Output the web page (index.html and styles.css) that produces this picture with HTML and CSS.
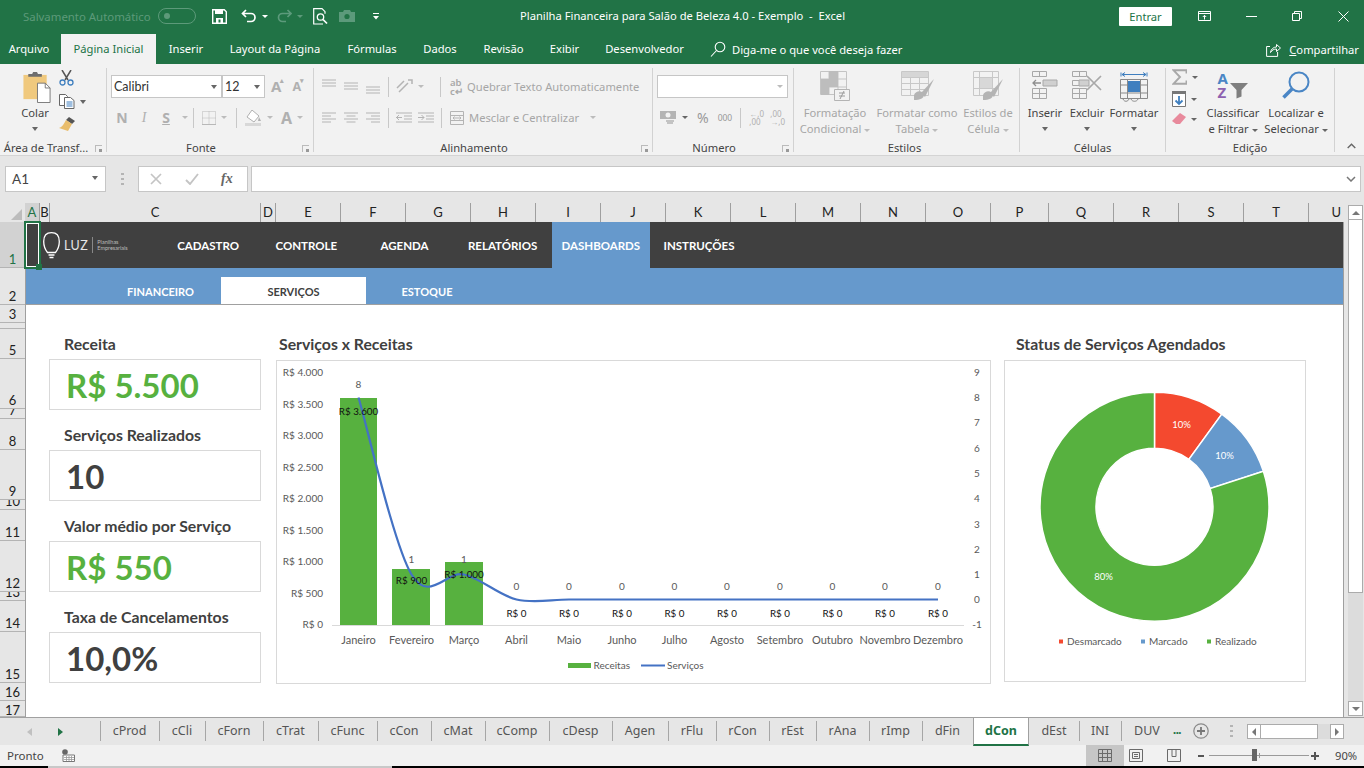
FILE: index.html
```html
<!DOCTYPE html>
<html lang="pt-BR">
<head>
<meta charset="utf-8">
<title>Planilha Financeira para Salão de Beleza 4.0 - Exemplo - Excel</title>
<link rel="stylesheet" href="styles.css">
</head>
<body>
<div class="app">

  <header class="titlebar">
    <div class="qat">
      <span class="autosave">Salvamento Automático</span>
      <span class="toggle"><i></i></span>
      <svg class="qi save" width="15" height="15" viewBox="0 0 15 15"><path d="M.7.7h11.6l2 2v11.6H.7z" fill="none" stroke="#fff" stroke-width="1.4"/><path d="M3 1h8v4H3zM4 9h7v5H4z" fill="#fff"/><path d="M6.500 10.500h2v3h-2z" fill="#217346"/></svg>
      <svg class="qi undo" width="16" height="14" viewBox="0 0 16 14"><path d="M5 1 1.500 4.500 5 8M2 4.500h8a4 4 0 0 1 0 8H6" fill="none" stroke="#fff" stroke-width="1.700"/></svg>
      <span class="qcaret"></span>
      <svg class="qi redo" width="15" height="14" viewBox="0 0 15 14"><path d="M10.500 1 14 4.500 10.500 8M13.500 4.500h-8a4 4 0 0 0 0 8H9" fill="none" stroke="#5c9a7b" stroke-width="1.700"/></svg>
      <span class="qcaret dim"></span>
      <svg class="qi preview" width="15" height="17" viewBox="0 0 15 17"><path d="M10 16H.7V.7H9l3 3v2" fill="none" stroke="#fff" stroke-width="1.200"/><circle cx="7.500" cy="9" r="3.200" fill="none" stroke="#fff" stroke-width="1.300"/><path d="m10 11.500 4 4" stroke="#fff" stroke-width="1.700"/></svg>
      <svg class="qi camera" width="16" height="12" viewBox="0 0 16 12"><path d="M0 2h4l1-2h6l1 2h4v10H0z" fill="#5c9a7b"/><circle cx="8" cy="6.500" r="2.600" fill="#217346"/></svg>
      <svg class="qi custom" width="6" height="7" viewBox="0 0 6 7"><path d="M0 .5h6" stroke="#fff"/><path d="M0 3h6L3 6.500z" fill="#fff"/></svg>
    </div>
    <div class="doc-title">Planilha Financeira para Salão de Beleza 4.0 - Exemplo&nbsp; -&nbsp; Excel</div>
    <div class="winctl">
      <span class="entrar">Entrar</span>
      <svg class="wi w-disp" width="13" height="10" viewBox="0 0 13 10"><path d="M.5.500h12v9H.5zM.5 2.500h12M6.500 8.500v-4M4.800 6 6.500 4.300 8.200 6" fill="none" stroke="#fff"/></svg>
      <svg class="wi w-min" width="11" height="1" viewBox="0 0 11 1"><path d="M0 .5h11" stroke="#fff"/></svg>
      <svg class="wi w-rest" width="10" height="10" viewBox="0 0 10 10"><path d="M.5 2.500h7v7h-7zM2.500 2.500v-2h7v7h-2" fill="none" stroke="#fff"/></svg>
      <svg class="wi w-close" width="11" height="11" viewBox="0 0 11 11"><path d="m.5.500 10 10M10.500.500l-10 10" stroke="#fff"/></svg>
    </div>
  </header>

  <nav class="menubar">
    <div class="mtabs">
      <span class="mtab first">Arquivo</span>
      <span class="mtab active">Página Inicial</span>
      <span class="mtab">Inserir</span>
      <span class="mtab">Layout da Página</span>
      <span class="mtab">Fórmulas</span>
      <span class="mtab">Dados</span>
      <span class="mtab">Revisão</span>
      <span class="mtab">Exibir</span>
      <span class="mtab">Desenvolvedor</span>
    </div>
    <span class="tellme">
      <svg width="16" height="16" viewBox="0 0 16 16"><circle cx="10" cy="6" r="4.800" fill="none" stroke="#fff" stroke-width="1.100"/><path d="m6.500 9.500-5.500 6" stroke="#fff" stroke-width="1.100"/></svg>
      Diga-me o que você deseja fazer
    </span>
    <span class="share">
      <svg width="15" height="15" viewBox="0 0 15 15"><path d="M4 4.500H.6v9.900h11V10" fill="none" stroke="#fff"/><path d="M4.500 10.500c.5-3.500 3-5.500 6-5.500V2.500l4 3.500-4 3.500V7c-2.500 0-4.500 1-6 3.500z" fill="none" stroke="#fff"/></svg>
      <span><u>C</u>ompartilhar</span>
    </span>
  </nav>

  <section class="ribbon">
    <div class="rgroup g-clip">
      <div class="rbody row">
        <div class="big w-colar">
          <svg class="bigicon colar-i" width="28" height="31" viewBox="0 0 28 32"><path d="M0 3h24v25H0z" fill="#f0c97e"/><path d="M5 5V2h4l1-2h4l1 2h4v3z" fill="#6e6e6e"/><path d="M14.500 11.500h8l5 5v15h-13z" fill="#fff" stroke="#7a7a7a"/><path d="M22.500 11.500v5h5" fill="none" stroke="#7a7a7a"/></svg>
          <span class="blabel dark">Colar</span>
          <span class="caret c-line"></span>
        </div>
        <div class="smallcol clipcol">
          <svg width="15" height="16" viewBox="0 0 15 16"><path d="M3 0l6 10M12 0 6 10" stroke="#555" stroke-width="1.500"/><circle cx="3.500" cy="12.500" r="2.500" fill="none" stroke="#3f7fbf" stroke-width="1.300"/><circle cx="11.500" cy="12.500" r="2.500" fill="none" stroke="#3f7fbf" stroke-width="1.300"/></svg>
          <span class="iconrow"><svg width="16" height="15" viewBox="0 0 16 15"><path d="M.5.500h6l2 2v9h-8z" fill="#fff" stroke="#666"/><path d="M5.500 3.500h6l3.500 3v8h-9.500z" fill="#fff" stroke="#666"/><path d="M7.500 8h6M7.500 10h6M7.500 12h6" stroke="#3f7fbf"/></svg><span class="caret"></span></span>
          <svg width="16" height="14" viewBox="0 0 16 14"><path d="M10 0l6 4-3 3-6-4z" fill="#555"/><path d="M7 3l6 4-4 7-9-3c3-1 5-4 7-8z" fill="#e9bd6b"/></svg>
        </div>
      </div>
      <div class="rlabel lw lclip">Área de Transf...<i class="launch"></i></div>
    </div>

    <div class="rgroup g-font">
      <div class="rbody col">
        <div class="rrow r1">
          <span class="combo font">Calibri<i class="caret"></i></span>
          <span class="combo size">12<i class="caret"></i></span>
          <span class="glyph-a big-a">A<sup>▴</sup></span>
          <span class="glyph-a small-a">A<sup>▾</sup></span>
        </div>
        <div class="rrow r2 fontfmt">
          <b class="fmt f-n">N</b><i class="fmt f-i">I</i><u class="fmt f-s">S</u><span class="caret dis"></span>
          <span class="vsep vs1"></span>
          <svg width="14" height="14" viewBox="0 0 14 14"><path d="M.5.500h13v13H.5zM7 .5v13M.5 7h13" fill="none" stroke="#b8b8b8" stroke-dasharray="1 1"/><path d="M0 13.500h14" stroke="#b8b8b8"/></svg><span class="caret dis"></span>
          <span class="vsep"></span>
          <svg width="17" height="16" viewBox="0 0 17 16"><path d="M7 0l7 6-5 6-7-5z" fill="#fff" stroke="#b0b0b0"/><path d="M14 7l2 4h-3z" fill="#b0b0b0"/><path d="M0 13h16v3H0z" fill="#d8d8d8"/></svg><span class="caret dis"></span>
          <span class="fontcolor">A</span><span class="caret dis"></span>
        </div>
      </div>
      <div class="rlabel lw">Fonte<i class="launch"></i></div>
    </div>

    <div class="rgroup g-align">
      <div class="rbody col">
        <div class="rrow r1 alrow">
          <svg class="al" width="14" height="15" viewBox="0 0 14 15"><path d="M0 1h14M0 4h14M0 7h14" stroke="#b4b4b4"/></svg>
          <svg class="al" width="14" height="15" viewBox="0 0 14 15"><path d="M0 4h14M0 7h14M0 10h14" stroke="#b4b4b4"/></svg>
          <svg class="al" width="14" height="15" viewBox="0 0 14 15"><path d="M0 8h14M0 11h14M0 14h14" stroke="#b4b4b4"/></svg>
          <span class="vsep"></span>
          <svg width="17" height="15" viewBox="0 0 17 15"><path d="M1 9l7-7M3 13l9-9M12 1h4v4" fill="none" stroke="#b4b4b4" stroke-width="1.500"/></svg><span class="caret dis"></span>
          <span class="vsep v2"></span>
          <span class="ab"><b>ab</b><b>c↵</b></span><span class="distext wrap">Quebrar Texto Automaticamente</span>
        </div>
        <div class="rrow r2 alrow">
          <svg class="al" width="14" height="12" viewBox="0 0 14 12"><path d="M0 1h14M0 4h9M0 7h14M0 10h9" stroke="#b4b4b4"/></svg>
          <svg class="al" width="14" height="12" viewBox="0 0 14 12"><path d="M0 1h14M2.500 4h9M0 7h14M2.500 10h9" stroke="#b4b4b4"/></svg>
          <svg class="al" width="14" height="12" viewBox="0 0 14 12"><path d="M0 1h14M5 4h9M0 7h14M5 10h9" stroke="#b4b4b4"/></svg>
          <span class="vsep"></span>
          <svg class="ind" width="16" height="12" viewBox="0 0 16 12"><path d="M0 1h16M8 4h8M8 7h8M0 10h16M6 5.500H0M3 3 .5 5.500 3 8" fill="none" stroke="#b4b4b4"/></svg>
          <svg width="16" height="12" viewBox="0 0 16 12"><path d="M0 1h16M8 4h8M8 7h8M0 10h16M0 5.500h6M3.500 3 6 5.500 3.500 8" fill="none" stroke="#b4b4b4"/></svg>
          <span class="vsep v3"></span>
          <svg width="14" height="14" viewBox="0 0 14 14"><path d="M.5.500h13v13H.5zM.5 4.500h13M.5 9.500h13M3 7h8M4.500 5.500 3 7l1.500 1.500M9.500 5.500 11 7 9.500 8.500" fill="none" stroke="#b4b4b4"/></svg>
          <span class="distext merge">Mesclar e Centralizar</span><span class="caret dis m-caret"></span>
        </div>
      </div>
      <div class="rlabel lw">Alinhamento<i class="launch"></i></div>
    </div>

    <div class="rgroup g-num">
      <div class="rbody col">
        <div class="rrow r1"><span class="combo numfmt"><i class="caret dis"></i></span></div>
        <div class="rrow r2 numrow">
          <svg width="16" height="14" viewBox="0 0 16 14"><path d="M0 0h16v8H0z" fill="#b4b4b4"/><circle cx="8" cy="4" r="2.500" fill="#f2f2f2"/><path d="M6 10h8M7 12h6" stroke="#b4b4b4" stroke-width="1.500"/></svg>
          <span class="caret dark-c"></span>
          <span class="pct">%</span>
          <span class="thou">000</span>
          <span class="vsep"></span>
          <span class="dec">←,0<br>,00</span>
          <span class="dec d2">,00<br>→,0</span>
        </div>
      </div>
      <div class="rlabel lw">Número<i class="launch"></i></div>
    </div>

    <div class="rgroup g-styles">
      <div class="rbody row">
        <div class="big w-s1">
          <svg class="bigicon" width="30" height="30" viewBox="0 0 30 30"><path d="M.5.500h26v23H.5zM9 .5v23M18 .5v23M.5 8h26M.5 16h26" fill="none" stroke="#c4c4c4"/><path d="M9 0h9v8H9zM1 8h17v8H1zM1 16h8v8H1z" fill="#bdbdbd"/><path d="M14.500 18.500h15v11h-15z" fill="#f2f2f2" stroke="#b4b4b4"/><path d="M19 22h6M19 25h6M24 20l-4 8" stroke="#9a9a9a"/></svg>
          <span class="blabel">Formatação</span><span class="blabel">Condicional <i class="caret dis"></i></span>
        </div>
        <div class="big w-s2">
          <svg class="bigicon" width="33" height="30" viewBox="0 0 33 30"><path d="M.5.500h27v24H.5zM9.500.5v24M18.500.5v24M.5 6.500h27M.5 12.500h27M.5 18.500h27" fill="none" stroke="#c8c8c8"/><path d="M1 1h26v5H1z" fill="#d6d6d6"/><path d="M33 8 20 22l4 4z" fill="#b4b4b4"/><path d="M13 24c2-5 9-5 10 0 0 3-4 5-10 5z" fill="#b4b4b4"/></svg>
          <span class="blabel">Formatar como</span><span class="blabel">Tabela <i class="caret dis"></i></span>
        </div>
        <div class="big w-s3">
          <svg class="bigicon" width="30" height="30" viewBox="0 0 30 30"><path d="M.5.500h25v24H.5zM6.500.5v24M19.500.5v24M.5 6.500h25M.5 17.500h25" fill="none" stroke="#c8c8c8"/><path d="M7 7h12v10H7z" fill="#d8d8d8"/><path d="M30 8 17 22l4 4z" fill="#b4b4b4"/><path d="M10 24c2-5 9-5 10 0 0 3-4 5-10 5z" fill="#b4b4b4"/></svg>
          <span class="blabel">Estilos de</span><span class="blabel">Célula <i class="caret dis"></i></span>
        </div>
      </div>
      <div class="rlabel ls">Estilos</div>
    </div>

    <div class="rgroup g-cells">
      <div class="rbody row">
        <div class="big w-c1">
          <svg class="bigicon" width="26" height="28" viewBox="0 0 26 28"><path d="M.5.500h14v5H.5zM7.500.5v5M.5 17.500h14v10H.5zM7.500 17.500v10M.5 22.500h14" fill="none" stroke="#a8a8a8"/><path d="M11 9h14v6H11z" fill="#d0d0d0" stroke="#a8a8a8"/><path d="M9 12H1M4 9l-3 3 3 3" fill="none" stroke="#8e8e8e" stroke-width="1.300"/></svg>
          <span class="blabel dark">Inserir</span><span class="caret c-line"></span>
        </div>
        <div class="big w-c1">
          <svg class="bigicon" width="30" height="28" viewBox="0 0 30 28"><path d="M.5.500h14v5H.5zM7.500.5v5M.5 17.500h14v10H.5zM7.500 17.500v10M.5 22.500h14M.5 9.500h7v5H.5z" fill="none" stroke="#a8a8a8"/><path d="M7 9h10v6H7z" fill="#d0d0d0" stroke="#a8a8a8"/><path d="m15 5 14 14M29 5 15 19" stroke="#a8a8a8" stroke-width="1.700"/></svg>
          <span class="blabel dark">Excluir</span><span class="caret c-line"></span>
        </div>
        <div class="big w-c2">
          <svg class="bigicon" width="28" height="31" viewBox="0 0 28 31"><path d="M1 1.500v4M27 1.500v4M2 3.500h24M5 1.500 2 3.500l3 2M23 1.500l3 2-3 2" fill="none" stroke="#3f7fbf"/><path d="M.5 8.500h27v19H.5zM7.500 8.500v19M20.500 8.500v19M.5 14h27M.5 22h27" fill="none" stroke="#8a8a8a"/><path d="M8 10h12v11H8z" fill="#3f7fbf"/><path d="M3 28c1 3 5 3 6 0M11 28c1 3 6 3 7 0" fill="none" stroke="#8a8a8a"/></svg>
          <span class="blabel dark">Formatar</span><span class="caret c-line"></span>
        </div>
      </div>
      <div class="rlabel">Células</div>
    </div>

    <div class="rgroup g-edit">
      <div class="rbody row">
        <div class="smallcol editcol">
          <span class="iconrow"><svg width="15" height="16" viewBox="0 0 15 16"><path d="M14.500 4.500V1.200H1.500L8 8l-6.500 6.800h13v-3.300" fill="none" stroke="#a8a8a8" stroke-width="1.900"/></svg><span class="caret dark-c"></span></span>
          <span class="iconrow"><svg width="14" height="16" viewBox="0 0 14 16"><path d="M.5.500h13v15H.5z" fill="#fff" stroke="#777"/><path d="M0 0h14v3H0z" fill="#777"/><path d="M7 5v8M3.500 9.500 7 13l3.500-3.500" fill="none" stroke="#3f7fbf" stroke-width="1.800"/></svg><span class="caret dark-c"></span></span>
          <span class="iconrow"><svg width="14" height="12" viewBox="0 0 14 12"><path d="M8 0l6 4-6 7H4L0 8z" fill="#e88a9c"/></svg><span class="caret dark-c"></span></span>
        </div>
        <div class="big w-e1">
          <span class="bigicon sorticon"><span class="azstack"><b class="az-a">A</b><b class="az-z">Z</b></span><svg width="19" height="17" viewBox="0 0 19 17"><path d="M0 1h18l-6.500 7v6.500l-5 2V8z" fill="#7f7f7f"/></svg></span>
          <span class="blabel dark">Classificar</span><span class="blabel dark">e Filtrar <i class="caret dark-c"></i></span>
        </div>
        <div class="big w-e2">
          <svg class="bigicon" width="28" height="28" viewBox="0 0 28 28"><circle cx="17" cy="11" r="9.500" fill="none" stroke="#4a86c5" stroke-width="2"/><path d="M10 18 1.500 26.500" stroke="#4a86c5" stroke-width="3.500"/></svg>
          <span class="blabel dark">Localizar e</span><span class="blabel dark">Selecionar <i class="caret dark-c"></i></span>
        </div>
      </div>
      <div class="rlabel">Edição</div>
    </div>
    <svg class="collapse" width="9" height="6" viewBox="0 0 9 6"><path d="M.7 5 4.500 1.200 8.300 5" fill="none" stroke="#666" stroke-width="1.400"/></svg>
  </section>

  <section class="formulabar">
    <span class="namebox">A1<i class="caret"></i></span>
    <span class="grip"></span>
    <span class="fxbox">
      <svg width="12" height="12" viewBox="0 0 12 12"><path d="m1 1 10 10M11 1 1 11" stroke="#c4c4c4" stroke-width="1.700"/></svg>
      <svg width="14" height="12" viewBox="0 0 14 12"><path d="m1 7 4 4 8-10" fill="none" stroke="#c4c4c4" stroke-width="1.900"/></svg>
      <span class="fx">fx</span>
    </span>
    <span class="finput"><svg width="10" height="6" viewBox="0 0 10 6"><path d="m1 1 4 4 4-4" fill="none" stroke="#777" stroke-width="1.500"/></svg></span>
  </section>

  <section class="grid-wrap">
    <div class="colheads">
      <span class="corner"><i></i></span>
      <span class="ch sel">A</span><span class="ch">B</span><span class="ch">C</span><span class="ch">D</span><span class="ch">E</span><span class="ch">F</span><span class="ch">G</span><span class="ch">H</span><span class="ch">I</span><span class="ch">J</span><span class="ch">K</span><span class="ch">L</span><span class="ch">M</span><span class="ch">N</span><span class="ch">O</span><span class="ch">P</span><span class="ch">Q</span><span class="ch">R</span><span class="ch">S</span><span class="ch">T</span><span class="ch">U</span>
    </div>
    <div class="sheetrow">
      <div class="rowheads">
        <span class="rh sel">1</span><span class="rh">2</span><span class="rh">3</span><span class="rh"></span><span class="rh">5</span><span class="rh">6</span><span class="rh">7</span><span class="rh">8</span><span class="rh">9</span><span class="rh">10</span><span class="rh">11</span><span class="rh">12</span><span class="rh">13</span><span class="rh">14</span><span class="rh">15</span><span class="rh">16</span><span class="rh">17</span>
      </div>
      <div class="sheet">
        <div class="a1cell"><i></i></div>
        <div class="topnav">
          <div class="logo">
            <svg width="17" height="27" viewBox="0 0 17 27"><path d="M4.500 20.500C2.500 18 .7 15 .7 9.500 .7 4 3.500.7 8.500.7s7.800 3.300 7.800 8.800c0 5.500-1.800 8.500-3.800 11z" fill="none" stroke="#fff" stroke-width="1.300"/><path d="M5.500 23h6M6.500 25.500h4" stroke="#fff" stroke-width="1.300"/></svg>
            <span class="luz">LUZ</span>
            <span class="logosep"></span>
            <span class="logosub">Planilhas<br>Empresariais</span>
          </div>
          <a class="navi">CADASTRO</a><a class="navi">CONTROLE</a><a class="navi">AGENDA</a><a class="navi">RELATÓRIOS</a><a class="navi on">DASHBOARDS</a><a class="navi">INSTRUÇÕES</a>
        </div>
        <div class="subnav">
          <a class="subi s1">FINANCEIRO</a><a class="subi s2 on">SERVIÇOS</a><a class="subi s3">ESTOQUE</a>
        </div>
        <div class="dash">
          <div class="kpis">
            <div class="kpi"><h3>Receita</h3><div class="kbox green">R$ 5.500</div></div>
            <div class="kpi"><h3>Serviços Realizados</h3><div class="kbox">10</div></div>
            <div class="kpi"><h3>Valor médio por Serviço</h3><div class="kbox green">R$ 550</div></div>
            <div class="kpi"><h3>Taxa de Cancelamentos</h3><div class="kbox">10,0%</div></div>
          </div>
          <div class="chartcol combo-chart">
            <h3>Serviços x Receitas</h3>
            <div class="chartbox">
              <svg class="chart" width="713" height="322" viewBox="277 361 713 322">
                <g class="axl yl" text-anchor="end">
                  <text x="323" y="375.500">R$ 4.000</text><text x="323" y="407.500">R$ 3.500</text><text x="323" y="438.500">R$ 3.000</text><text x="323" y="470.500">R$ 2.500</text><text x="323" y="501.500">R$ 2.000</text><text x="323" y="533.500">R$ 1.500</text><text x="323" y="564.500">R$ 1.000</text><text x="323" y="596.500">R$ 500</text><text x="323" y="627.500">R$ 0</text>
                </g>
                <g class="axl yl" text-anchor="middle">
                  <text x="977" y="375.500">9</text><text x="977" y="401">8</text><text x="977" y="426">7</text><text x="977" y="451.500">6</text><text x="977" y="476.500">5</text><text x="977" y="502">4</text><text x="977" y="527.500">3</text><text x="977" y="552.500">2</text><text x="977" y="578">1</text><text x="977" y="603">0</text><text x="977" y="628">-1</text>
                </g>
                <path d="M332 625.500h632" stroke="#d9d9d9"/>
                <g fill="#57b13f"><rect x="340" y="398" width="37" height="227"/><rect x="392" y="569" width="38" height="56"/><rect x="445" y="562" width="38" height="63"/></g>
                <path d="M358.500 397.500C367.300 427 393.900 545 411.500 574.500C429.100 604 446.500 570.300 464 574.500C481.500 578.700 499 595.300 516.500 599.500C534 603.700 551.500 599.500 569 599.500L938 599.500" fill="none" stroke="#4472c4" stroke-width="2.200"/>
                <g class="axl yl" text-anchor="middle">
                  <text x="358.500" y="387.500">8</text><text x="411.500" y="563">1</text><text x="464" y="563">1</text><text x="516.500" y="589.500">0</text><text x="569" y="589.500">0</text><text x="622" y="589.500">0</text><text x="674.500" y="589.500">0</text><text x="727" y="589.500">0</text><text x="780" y="589.500">0</text><text x="832.500" y="589.500">0</text><text x="885" y="589.500">0</text><text x="938" y="589.500">0</text>
                </g>
                <g class="dl" text-anchor="middle">
                  <text x="358.500" y="414.500">R$ 3.600</text><text x="411.500" y="584">R$ 900</text><text x="464" y="578">R$ 1.000</text><text x="516.500" y="617">R$ 0</text><text x="569" y="617">R$ 0</text><text x="622" y="617">R$ 0</text><text x="674.500" y="617">R$ 0</text><text x="727" y="617">R$ 0</text><text x="780" y="617">R$ 0</text><text x="832.500" y="617">R$ 0</text><text x="885" y="617">R$ 0</text><text x="938" y="617">R$ 0</text>
                </g>
                <g class="axl" text-anchor="middle">
                  <text x="358.500" y="644">Janeiro</text><text x="411.500" y="644">Fevereiro</text><text x="464" y="644">Março</text><text x="516.500" y="644">Abril</text><text x="569" y="644">Maio</text><text x="622" y="644">Junho</text><text x="674.500" y="644">Julho</text><text x="727" y="644">Agosto</text><text x="780" y="644">Setembro</text><text x="832.500" y="644">Outubro</text><text x="885" y="644">Novembro</text><text x="938" y="644">Dezembro</text>
                </g>
                <rect x="568" y="663" width="23" height="5" fill="#57b13f"/>
                <path d="M641 665.500h24" stroke="#4472c4" stroke-width="2"/>
                <g class="axl small"><text x="593.500" y="668.500">Receitas</text><text x="667" y="668.500">Serviços</text></g>
              </svg>
            </div>
          </div>
          <div class="chartcol donut-chart">
            <h3>Status de Serviços Agendados</h3>
            <div class="chartbox">
              <svg class="chart" width="300" height="320" viewBox="1005 361 300 320">
                <g stroke="#fff" stroke-width="1.500">
                  <path fill="#f4492f" d="M1154.500 392.200A114.500 114.500 0 0 1 1221.800 414.100L1188.900 459.400A58.500 58.500 0 0 0 1154.500 448.200Z"/>
                  <path fill="#6699cc" d="M1221.800 414.100A114.500 114.500 0 0 1 1263.400 471.300L1210.100 488.600A58.500 58.500 0 0 0 1188.900 459.400Z"/>
                  <path fill="#57b13f" d="M1263.400 471.300A114.500 114.500 0 1 1 1154.500 392.200L1154.500 448.200A58.500 58.500 0 1 0 1210.100 488.600Z"/>
                </g>
                <g class="pct-l" text-anchor="middle"><text x="1181.500" y="427.500">10%</text><text x="1224.500" y="459">10%</text><text x="1103.500" y="580">80%</text></g>
                <rect x="1059" y="639.500" width="4" height="4" fill="#f4492f"/><rect x="1141" y="639.500" width="4" height="4" fill="#6699cc"/><rect x="1207" y="639.500" width="4" height="4" fill="#57b13f"/>
                <g class="axl small"><text x="1067" y="645">Desmarcado</text><text x="1149" y="645">Marcado</text><text x="1215" y="645">Realizado</text></g>
              </svg>
            </div>
          </div>
        </div>
      </div>
      <div class="vscroll">
        <span class="sbtn"><i class="tri up"></i></span>
        <span class="vthumb"></span>
        <span class="vtrack"></span>
        <span class="sbtn"><i class="tri down"></i></span>
      </div>
    </div>
  </section>

  <section class="tabbar">
    <div class="tabnav">
      <i class="tl"></i><i class="tr"></i>
    </div>
    <div class="tabs">
      <span class="stab">cProd</span><span class="stab">cCli</span><span class="stab">cForn</span><span class="stab">cTrat</span><span class="stab">cFunc</span><span class="stab">cCon</span><span class="stab">cMat</span><span class="stab">cComp</span><span class="stab">cDesp</span><span class="stab">Agen</span><span class="stab">rFlu</span><span class="stab">rCon</span><span class="stab">rEst</span><span class="stab">rAna</span><span class="stab">rImp</span><span class="stab">dFin</span><span class="stab on">dCon</span><span class="stab">dEst</span><span class="stab">INI</span><span class="stab last">DUV</span>
    </div>
    <span class="more">...</span>
    <svg class="addsheet" width="16" height="16" viewBox="0 0 16 16"><circle cx="8" cy="8" r="7.200" fill="none" stroke="#8a8a8a" stroke-width="1.200"/><path d="M8 4v8M4 8h8" stroke="#777" stroke-width="1.800"/></svg>
    <span class="grip g2"></span>
    <div class="hscroll">
      <span class="sbtn h"><i class="tri left"></i></span>
      <span class="hthumb"></span>
      <span class="htrack"></span>
      <span class="sbtn h"><i class="tri right"></i></span>
    </div>
  </section>

  <footer class="statusbar">
    <span class="pronto">Pronto</span>
    <svg class="macro" width="13" height="13" viewBox="0 0 13 13"><circle cx="3" cy="3" r="2.800" fill="#666"/><path d="M1 6h11.500v6.500H1z" fill="#fff" stroke="#777"/><path d="M2 8.500h10M2 10.500h10M4.500 7v5M7 7v5M9.500 7v5" stroke="#999" stroke-width=".8"/></svg>
    <span class="viewbtn on"><svg width="14" height="13" viewBox="0 0 14 13"><path d="M.5.500h13v12H.5zM.5 4.500h13M.5 8.500h13M4.500.5v12M9.500.5v12" fill="none" stroke="#6a6a6a"/></svg></span>
    <span class="viewbtn v2b"><svg width="14" height="13" viewBox="0 0 14 13"><path d="M.5.500h13v12H.5z" fill="none" stroke="#6a6a6a"/><path d="M3.500 3.500h7v6h-7zM5 5.500h4M5 7.500h4" fill="none" stroke="#6a6a6a"/></svg></span>
    <span class="viewbtn v3b"><svg width="14" height="13" viewBox="0 0 14 13"><path d="M.5.500h13v12H.5zM5 .5v7h4V.5" fill="none" stroke="#6a6a6a"/></svg></span>
    <span class="zminus"></span>
    <span class="slider"><i class="mid"></i><i class="knob"></i></span>
    <span class="zplus"></span>
    <span class="zoom">90%</span>
  </footer>
  <div class="strip"><i></i></div>
</div>
</body>
</html>
```
FILE: styles.css
```css
*{box-sizing:border-box}
html,body{margin:0;padding:0;background:#000}
body{font-family:"Noto Sans","Open Sans",sans-serif;font-size:11.2px;color:#444;overflow:hidden}
svg{display:block;flex:none}
i{font-style:normal}
.app{width:1364px;height:768px;display:flex;flex-direction:column;background:#e6e6e6;overflow:hidden}

/* title bar */
.titlebar{height:34px;background:#217346;display:flex;align-items:flex-start;color:#fff;flex:none}
.qat{width:520px;height:32px;display:flex;align-items:center;padding-left:23px;flex:none}
.autosave{color:#5d9a7a;font-size:11.400px;width:135px;white-space:nowrap}
.toggle{width:38px;height:16px;border:1px solid #5d9a7a;border-radius:8px;display:flex;align-items:center;padding-left:5px}
.toggle i{width:6px;height:6px;border-radius:50%;background:#5d9a7a}
.qi.save{margin-left:16px}
.qi.undo{margin-left:14px}
.qcaret{width:0;height:0;border:3px solid transparent;border-top:3px solid #fff;border-bottom:0;margin-left:5px}
.qcaret.dim{border-top-color:#5d9a7a}
.qi.redo{margin-left:9px}
.qi.preview{margin-left:10px}
.qi.camera{margin-left:11px}
.qi.custom{margin-left:18px}
.doc-title{font-size:11.200px;line-height:32px;white-space:nowrap}
.winctl{margin-left:auto;height:32px;display:flex;align-items:center;padding-right:15px}
.entrar{width:53px;height:19px;background:#fff;color:#217346;text-align:center;font-size:11.200px;line-height:19px;border-radius:1px;margin-right:26px}
.w-min{margin-left:35px}
.w-rest{margin-left:35px}
.w-close{margin-left:36px}

/* menu */
.menubar{height:30px;background:#217346;display:flex;align-items:stretch;color:#fff;flex:none}
.mtabs{display:grid;grid-template-columns:61px 95px 60px 118px 76px 60px 67px 55px 105px;flex:none}
.mtab{line-height:30px;text-align:center;white-space:nowrap}
.mtab.first{padding-right:3px}
.mtab.active{background:#f2f2f2;color:#217346}
.tellme{margin-left:13px;display:flex;align-items:center;gap:6px;white-space:nowrap}
.share{margin-left:auto;padding-right:5px;display:flex;align-items:center;gap:8px;white-space:nowrap}

/* ribbon */
.ribbon{height:92px;background:#f2f2f2;display:flex;padding-top:4px;border-bottom:1px solid #d4d4d4;position:relative;flex:none}
.rgroup{height:84px;border-right:1px solid #d2d2d2;display:flex;flex-direction:column;flex:none;position:relative}
.g-clip{width:107px}
.g-font{width:207px}
.g-align{width:339px}
.g-num{width:141px}
.g-styles{width:226px}
.g-cells{width:146px}
.g-edit{width:169px}
.rbody{height:72px;flex:none}
.rbody.row{display:flex}
.rbody.col{display:flex;flex-direction:column}
.rlabel{height:12px;line-height:16px;text-align:center;color:#444;white-space:nowrap}
.rlabel.lw{padding-right:18px}
.rlabel.lclip{padding-right:14px}
.rlabel.ls{padding-right:4px}
.launch{position:absolute;right:4px;bottom:0;width:7px;height:7px;border-top:1px solid #bbb;border-left:1px solid #bbb;background:linear-gradient(#999,#999) right bottom/3px 3px no-repeat}
.big{display:flex;flex-direction:column;align-items:center;flex:none;height:69px}
.bigicon{margin-top:3px;margin-bottom:auto}
.colar-i{margin-top:4px;margin-left:4px}
.blabel{color:#a6a6a6;line-height:16px;white-space:nowrap}
.blabel.dark{color:#444}
.caret{display:inline-block;width:0;height:0;border:3.500px solid transparent;border-top:4px solid #666;border-bottom:0;vertical-align:middle}
.caret.dis{border-top-color:#bcbcbc;border-width:3px;border-top-width:3px;border-bottom:0}
.caret.dark-c{border-width:3px;border-top-color:#666;border-bottom:0}
.c-line{display:block;margin:6px 0}
.smallcol{display:flex;flex-direction:column;flex:none}
.iconrow{display:flex;align-items:center;gap:5px}
.w-colar{width:50px;margin-left:10px}
.clipcol{margin-left:-1px;padding-top:2px;gap:8px}
.rrow{display:flex;align-items:center;flex:none}
.rrow.r1{height:23px;margin-top:7px}
.rrow.r2{height:23px;margin-top:8px}
.combo{background:#fff;border:1px solid #c6c6c6;height:23px;line-height:21px;font-family:"Lato",sans-serif;font-size:12.500px;color:#333;padding-left:2px;position:relative;display:block;flex:none}
.combo .caret{position:absolute;right:4px;top:9px}
.combo.font{width:111px;margin-left:4px}
.combo.size{width:43px}
.glyph-a{color:#b0b0b0;font-weight:700;display:flex;line-height:23px}
.glyph-a sup{font-size:7px;line-height:12px;margin-left:-1px}
.big-a{font-size:15px;margin-left:6px}
.small-a{font-size:12.500px;margin-left:8px}
.fontfmt{padding-left:4px}
.fmt{color:#b0b0b0;font-size:14px;font-style:normal;width:22px;text-align:center;text-decoration:none;font-weight:700;flex:none}
.fmt.f-i{font-style:italic;font-weight:400;font-family:"Liberation Serif",serif}
.fmt.f-s{text-decoration:underline}
.fontfmt .caret{margin-left:5px}
.vsep{width:1px;height:20px;background:#c8c8c8;margin:0 8px 0 9px;flex:none}
.vs1{margin-left:5px}
.fontcolor{color:#b0b0b0;font-size:16px;font-weight:700;margin-left:8px}
.alrow{padding-left:8px}
.alrow .al{margin-right:8px}
.alrow .vsep{margin:0 7px 0 0}
.alrow .ind{margin-right:6px}
.alrow .caret{margin-left:5px}
.alrow .vsep.v2{margin:0 9px 0 16px}
.alrow .vsep.v3{margin:0 8px 0 7px}
.ab{display:flex;flex-direction:column;font-size:9.500px;line-height:9px;color:#a8a8a8;width:17px}
.ab b{font-weight:600}
.distext{color:#a6a6a6;white-space:nowrap}
.merge{margin-left:5px}
.alrow .m-caret{margin-left:11px}
.combo.numfmt{width:131px;margin-left:4px}
.numrow{padding-left:7px}
.numrow .caret{margin-left:6px}
.pct{color:#999;font-size:14px;margin-left:9px}
.thou{color:#999;font-size:8.500px;margin-left:9px}
.numrow .vsep{margin:0 8px}
.dec{color:#b0b0b0;font-size:8px;line-height:8px;width:21px;white-space:nowrap}
.w-s1{width:76px;margin-left:3px}
.w-s2{width:88px}
.w-s3{width:54px}
.w-c1{width:42px}
.w-c1:first-child{margin-left:4px}
.w-c2{width:52px}
.editcol{margin-left:6px;width:31px;gap:6px;padding-top:1px}
.w-e1{width:60px}
.w-e2{width:66px}
.sorticon{display:flex;align-items:flex-end;width:31px}
.azstack{display:flex;flex-direction:column;width:13px;font-size:15px;line-height:14px}
.az-a{color:#4a86c5}
.az-z{color:#8e62b0}

.collapse{position:absolute;left:1347px;top:79px}

/* formula bar */
.formulabar{height:47px;display:flex;align-items:flex-start;padding:10px 3px 0 5px;flex:none}
.namebox{width:101px;height:26px;background:#fff;border:1px solid #c6c6c6;font-family:"Lato",sans-serif;font-size:13.500px;line-height:24px;color:#444;padding-left:6px;position:relative;flex:none}
.namebox .caret{position:absolute;right:7px;top:9px}
.grip{width:3px;height:12px;margin:7px 14px 0 15px;flex:none;background:repeating-linear-gradient(#b4b4b4 0 2px,transparent 2px 5px)}
.fxbox{width:110px;height:26px;background:#fff;border:1px solid #c6c6c6;display:flex;align-items:center;padding-left:11px;flex:none}
.fxbox svg+svg{margin-left:23px}
.fx{font-family:"Liberation Serif",serif;font-style:italic;font-size:14px;font-weight:700;color:#666;margin-left:22px}
.finput{flex:1;height:26px;margin-left:3px;background:#fff;border:1px solid #c6c6c6;display:flex;align-items:center;justify-content:flex-end;padding-right:4px}

/* grid */
.grid-wrap{height:514px;flex:none;display:flex;flex-direction:column}
.colheads{height:19px;display:grid;grid-template-columns:25px 15px 10px 211px 15px repeat(11,65px) 58px 65px 65px 65px 65px 35px;flex:none;font-family:"Lato",sans-serif;font-size:13px;color:#222}
.corner{position:relative}
.corner i{position:absolute;right:3px;bottom:3px;width:0;height:0;border-left:11px solid transparent;border-bottom:11px solid #bcbcbc}
.ch{text-align:center;line-height:19px;border-right:1px solid #9f9f9f;border-bottom:1px solid #9f9f9f}
.ch:last-child{border-right:0;text-align:right;padding-right:3px}
.ch.sel{background:#d2d2d2;color:#217346;border-bottom:1px solid #9f9f9f}
.sheetrow{flex:1;display:flex;min-height:0}
.rowheads{width:26px;flex:none;display:grid;grid-template-rows:46px 37px 18px 6px 30px 50px 10px 31px 50px 10px 31px 51px 9px 31px 51px 18px 16px;height:495px;border-right:1px solid #9f9f9f;font-family:"Lato",sans-serif;font-size:13px;color:#222}
.rh{display:flex;align-items:flex-end;justify-content:center;border-bottom:1px solid #b4b4b4;line-height:14px;overflow:hidden;padding-bottom:1px}
.rh:last-child{line-height:12px;padding-bottom:0}
.rh.sel{background:#d2d2d2;color:#217346}
.sheet{width:1318px;background:#fff;flex:none;height:495px;position:relative;border-right:1px solid #9f9f9f}
.a1cell{position:absolute;left:-2px;top:-1px;width:17px;height:48px;border:2px solid #217346;z-index:2;box-shadow:inset 0 0 0 1px #fff}
.a1cell i{position:absolute;right:-3px;bottom:-3px;width:6px;height:6px;background:#217346}
.topnav{height:46px;background:#404040;display:flex;align-items:center;font-family:"Lato",sans-serif}
.logo{width:133px;flex:none;display:flex;align-items:center;padding-left:17px;color:#e0e0e0}
.luz{font-size:12.500px;letter-spacing:.5px;margin-left:4px;color:#e6e6e6}
.logosep{width:1px;height:16px;background:#888;margin:0 4px}
.logosub{font-size:5.500px;line-height:6.500px;color:#bbb}
.navi{width:98.200px;height:46px;line-height:47px;text-align:center;color:#fff;font-weight:700;font-size:11.500px;flex:none}
.navi.on{background:#6699cc}
.subnav{height:37px;background:#6699cc;display:flex;align-items:flex-end;padding-left:74px;border-bottom:1px solid #a0a0a0;font-family:"Lato",sans-serif}
.subi{height:27px;line-height:29px;text-align:center;color:#fff;font-weight:700;font-size:11px}
.s1{width:121px}
.s2{width:145px}
.s3{width:122px}
.subi.on{background:#fff;color:#404040}
.dash{display:flex;padding:15px 0 0 23px;font-family:"Lato",sans-serif;color:#404040}
.kpis{display:flex;flex-direction:column;width:212px;flex:none;margin-top:-1px}
h3{margin:0;height:40px;padding-top:14px;line-height:20px;font-weight:700;font-size:15.800px;color:#404040;white-space:nowrap}
.kpi h3{padding-left:15px;padding-top:15px}
.kbox{height:51px;border:1px solid #d9d9d9;font-weight:700;font-size:33px;line-height:51px;padding-left:16px;color:#404040}
.kbox.green{color:#57b13f}
.combo-chart{margin-left:15px;width:715px;flex:none}
.combo-chart h3{padding-left:3px}
.donut-chart{margin-left:13px;width:302px;flex:none}
.donut-chart h3{padding-left:12px}
.chartbox{border:1px solid #d9d9d9;background:#fff}
.combo-chart .chartbox{height:324px}
.donut-chart .chartbox{height:322px}
.chart{font-family:"Lato",sans-serif}
.axl{font-size:11px;fill:#595959}
.axl.yl{font-size:10px}
.axl.small{font-size:10px}
.dl{font-size:9.800px;fill:#111}
.pct-l{font-size:9.500px;fill:#fff}
.vscroll{width:15px;margin-left:4px;margin-top:-17px;display:flex;flex-direction:column;height:511px;background:#e0e0e0;flex:none}
.sbtn{height:15px;background:#fff;border:1px solid #ababab;display:flex;align-items:center;justify-content:center;flex:none}
.sbtn.h{width:14px}
.vthumb{height:373px;background:#fff;border:1px solid #ababab;border-top:0;flex:none}
.vtrack{flex:1;background:#dcdcdc}
.tri{width:0;height:0;border:4px solid transparent}
.tri.up{border-bottom:4px solid #777;border-top:0}
.tri.down{border-top:4px solid #777;border-bottom:0}
.tri.left{border-right:4px solid #777;border-left:0}
.tri.right{border-left:4px solid #777;border-right:0}

/* sheet tabs */
.tabbar{height:28px;background:#e6e6e6;border-top:1px solid #a0a0a0;display:flex;align-items:stretch;flex:none}
.tabnav{width:100px;display:flex;align-items:center;padding-left:27px;gap:26px;flex:none}
.tl{width:0;height:0;border:4px solid transparent;border-right:5px solid #c0c0c0;border-left:0}
.tr{width:0;height:0;border:4px solid transparent;border-left:5px solid #217346;border-right:0}
.tabs{display:grid;grid-template-columns:59px 46px 58px 55px 59px 54px 54px 64px 63px 56px 48px 53px 47px 53px 53px 51px 56px 50px 42px 52px;font-size:12.500px;color:#555;flex:none}
.stab{text-align:center;line-height:26px;position:relative}
.stab::before{content:"";position:absolute;left:0;top:3px;height:20px;width:1px;background:#a6a6a6}
.stab.on{background:#fff;color:#217346;font-weight:700;margin-top:-1px;border:1px solid #a0a0a0;border-bottom:2px solid #217346}
.stab.on::before,.stab.on+.stab::before{display:none}
.more{color:#217346;font-weight:800;font-size:11px;line-height:24px;width:20px;letter-spacing:-.5px}
.addsheet{margin-top:5px}
.grip.g2{margin:7px 14px 0 21px}
.hscroll{display:flex;height:15px;margin-top:6px;background:#dcdcdc;width:97px}
.hthumb{width:57px;background:#fff;border:1px solid #ababab;border-left:0}
.htrack{width:12px}

/* status */
.statusbar{height:21px;background:#f1f1f1;display:flex;align-items:center;color:#444;flex:none}
.pronto{margin-left:7px;width:55px;font-size:11.500px}
.viewbtn{width:38px;height:21px;display:flex;align-items:center;justify-content:center}
.viewbtn.on{background:#c6c6c6;margin-left:1011px}
.v2b{margin-left:5px;width:14px}
.v3b{margin-left:24px;width:14px}
.zminus{width:6px;height:2px;background:#555;margin-left:17px}
.slider{width:100px;height:1px;background:#9a9a9a;margin-left:5px;position:relative}
.slider .knob{position:absolute;left:43px;top:-6px;width:5px;height:12px;background:#666}
.slider .mid{position:absolute;left:50px;top:-2px;width:1px;height:5px;background:#9a9a9a}
.zplus{width:8px;height:8px;margin-left:2px;background:linear-gradient(#555,#555) center/8px 2px no-repeat,linear-gradient(#555,#555) center/2px 8px no-repeat}
.zoom{margin-left:16px}
.strip{height:2px;background:#000;flex:none;position:relative}
.strip i{position:absolute;left:48px;width:344px;height:2px;background:#c8c8c8}
```
